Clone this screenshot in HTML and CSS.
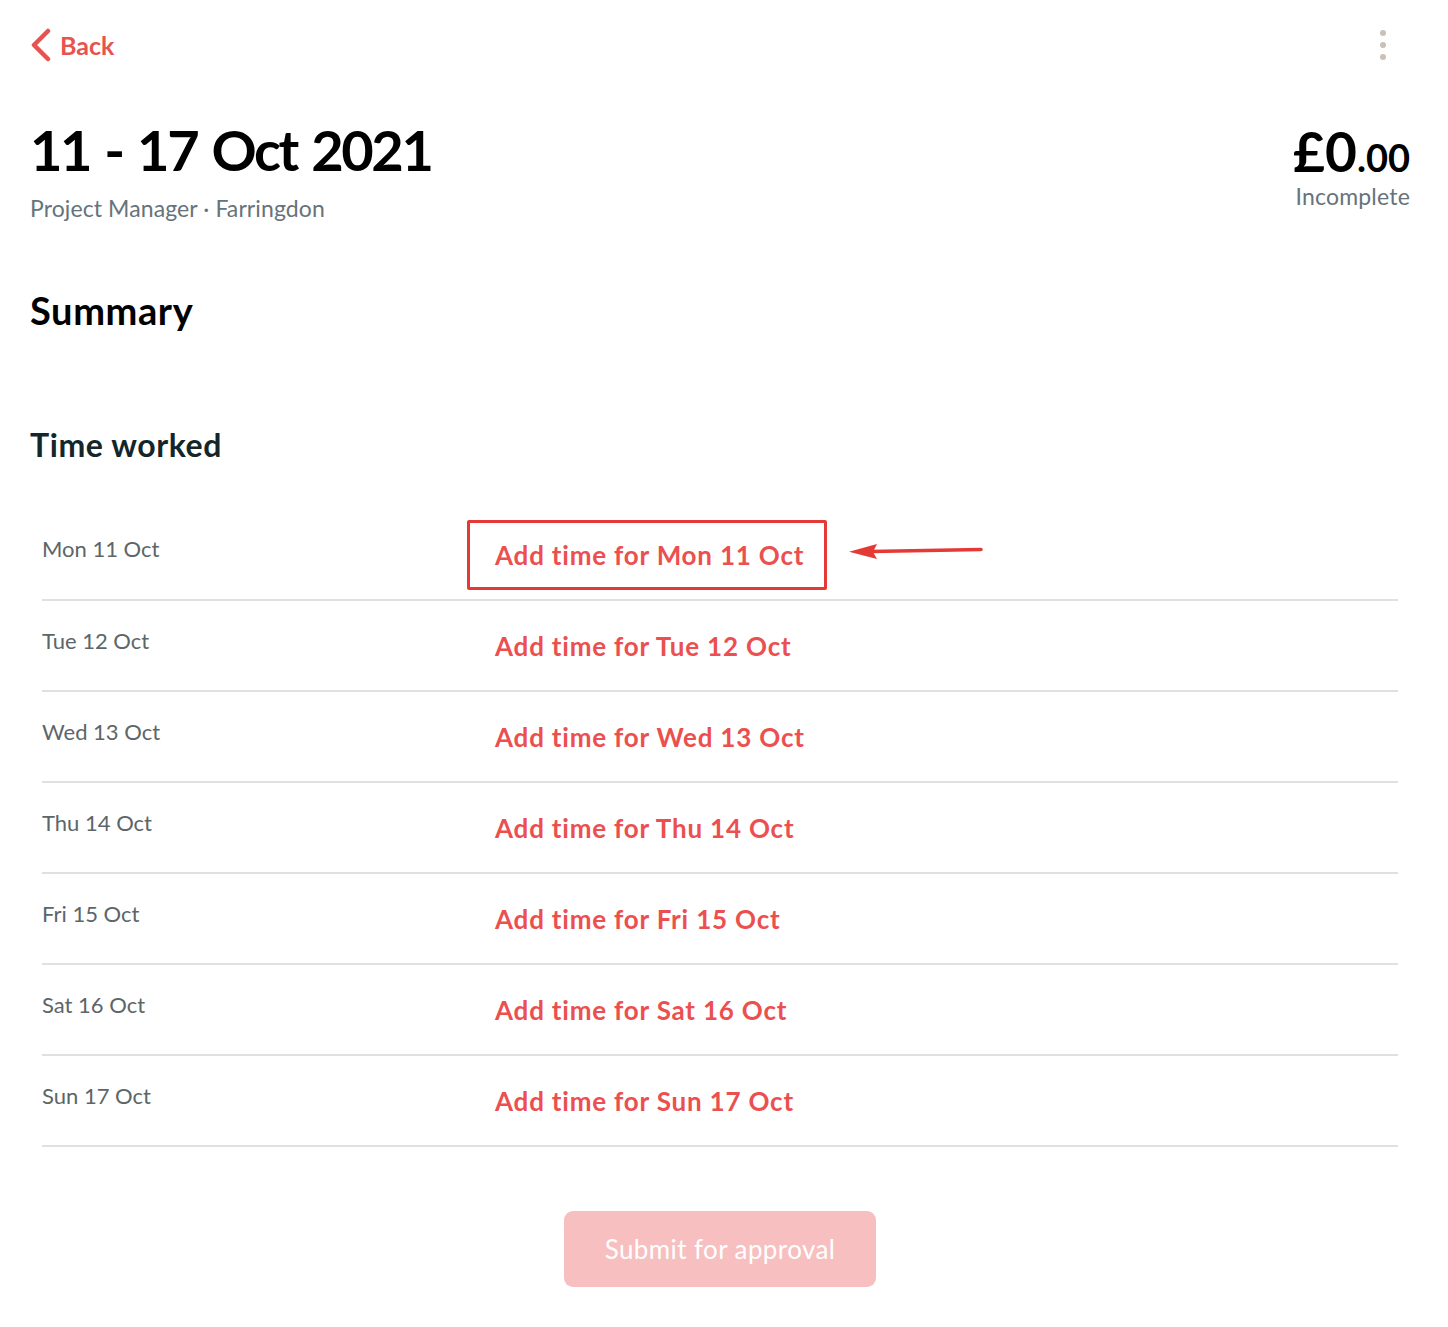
FILE: index.html
```html
<!DOCTYPE html>
<html lang="en">
<head>
    <meta charset="UTF-8">
    <meta name="viewport" content="width=device-width, initial-scale=1.0">
    <title>Timesheet</title>
    <link rel="stylesheet" href="styles.css">
</head>
<body>
    <div class="top-bar">
        <a href="#" class="back-link">
            <svg class="back-icon" width="22" height="34" viewBox="0 0 22 34">
                <path d="M18 3 L4 17 L18 31" fill="none" stroke="#e8524f" stroke-width="4.5" stroke-linecap="round" stroke-linejoin="round"/>
            </svg>
            Back
        </a>
        <div class="more-menu">
            <span class="dot"></span>
            <span class="dot"></span>
            <span class="dot"></span>
        </div>
    </div>

    <div class="header">
        <div class="header-left">
            <h1 class="week-title">11 - 17 Oct 2021</h1>
            <p class="week-meta">Project Manager · Farringdon</p>
        </div>
        <div class="header-right">
            <div class="amount">£0<span class="pence">.00</span></div>
            <div class="status">Incomplete</div>
        </div>
    </div>

    <h2 class="summary-title">Summary</h2>
    <h3 class="section-title">Time worked</h3>

    <div class="day-list">
        <div class="day-row">
            <div class="day-name">Mon 11 Oct</div>
            <div class="day-action highlighted">
                <a href="#" class="add-link">Add time for Mon 11 Oct</a>
                <svg class="arrow" width="140" height="20" viewBox="0 0 140 20">
                    <path d="M24 10.5 L134 8.5" stroke="#e53935" stroke-width="3.5" stroke-linecap="round"/>
                    <path d="M2 10.8 L30 3 L26 11 L30 18 Z" fill="#e53935"/>
                </svg>
            </div>
        </div>
        <div class="day-row">
            <div class="day-name">Tue 12 Oct</div>
            <div class="day-action"><a href="#" class="add-link">Add time for Tue 12 Oct</a></div>
        </div>
        <div class="day-row">
            <div class="day-name">Wed 13 Oct</div>
            <div class="day-action"><a href="#" class="add-link">Add time for Wed 13 Oct</a></div>
        </div>
        <div class="day-row">
            <div class="day-name">Thu 14 Oct</div>
            <div class="day-action"><a href="#" class="add-link">Add time for Thu 14 Oct</a></div>
        </div>
        <div class="day-row">
            <div class="day-name">Fri 15 Oct</div>
            <div class="day-action"><a href="#" class="add-link">Add time for Fri 15 Oct</a></div>
        </div>
        <div class="day-row">
            <div class="day-name">Sat 16 Oct</div>
            <div class="day-action"><a href="#" class="add-link">Add time for Sat 16 Oct</a></div>
        </div>
        <div class="day-row">
            <div class="day-name">Sun 17 Oct</div>
            <div class="day-action"><a href="#" class="add-link">Add time for Sun 17 Oct</a></div>
        </div>
    </div>

    <div class="submit-wrap">
        <button class="submit-btn" disabled>Submit for approval</button>
    </div>
</body>
</html>
```

FILE: styles.css
```css
* {
    margin: 0;
    padding: 0;
    box-sizing: border-box;
}

body {
    font-family: Lato, 'Noto Sans', sans-serif;
    background: #fff;
    color: #000;
    padding: 0 38px 0 30px;
}

.top-bar {
    display: flex;
    justify-content: space-between;
    align-items: center;
    height: 92px;
}

.back-link {
    display: flex;
    align-items: center;
    gap: 8px;
    color: #e8524f;
    text-decoration: none;
    font-size: 25px;
    font-weight: 700;
    margin-top: -2px;
}

.more-menu {
    display: flex;
    flex-direction: column;
    gap: 6px;
    margin-right: 24px;
    margin-top: -2px;
}

.dot {
    width: 6px;
    height: 6px;
    border-radius: 50%;
    background: #c9c0b8;
}

.header {
    display: flex;
    justify-content: space-between;
    align-items: flex-start;
}

.week-title {
    font-size: 56px;
    font-weight: 700;
    letter-spacing: -2.4px;
    word-spacing: 3px;
    line-height: 1;
    margin-top: 30px;
}

.week-meta {
    font-size: 23px;
    letter-spacing: 0.1px;
    color: #66737a;
    margin-top: 16px;
}

.header-right {
    text-align: right;
    margin-top: 32px;
}

.amount {
    font-size: 55px;
    font-weight: 700;
    line-height: 1;
}

.pence {
    font-size: 38px;
}

.status {
    font-size: 23px;
    letter-spacing: 0.2px;
    color: #66737a;
    margin-top: 3px;
}

.summary-title {
    font-size: 38px;
    font-weight: 700;
    letter-spacing: 0.6px;
    margin-top: 65px;
}

.section-title {
    font-size: 32px;
    font-weight: 700;
    letter-spacing: 0.6px;
    color: #13262b;
    margin-top: 92px;
}

.day-list {
    margin: 45px 12px 0 12px;
}

.day-row {
    display: flex;
    height: 91px;
    border-bottom: 2px solid #e0e0e0;
}

.day-row:first-child {
    height: 92px;
}

.day-name {
    width: 453px;
    font-size: 22px;
    color: #5c6669;
    padding-top: 26px;
}

.day-action {
    display: flex;
    align-items: center;
    height: 100%;
}

.add-link {
    color: #ec4f4f;
    text-decoration: none;
    font-size: 26px;
    font-weight: 700;
    letter-spacing: 0.8px;
}

.highlighted .add-link {
    border: 3px solid #e53935;
    border-radius: 2px;
    padding: 16px 20px 16px 25px;
    margin-left: -28px;
    margin-top: 2px;
}

.arrow {
    margin-left: 20px;
    margin-top: -6px;
}

.submit-wrap {
    display: flex;
    justify-content: center;
    padding: 64px 0 40px;
}

.submit-btn {
    background: #f7bfbf;
    border: none;
    border-radius: 9px;
    width: 312px;
    height: 76px;
    color: #fff;
    font-family: Lato, 'Noto Sans', sans-serif;
    font-size: 26px;
    letter-spacing: 0.4px;
}
```
